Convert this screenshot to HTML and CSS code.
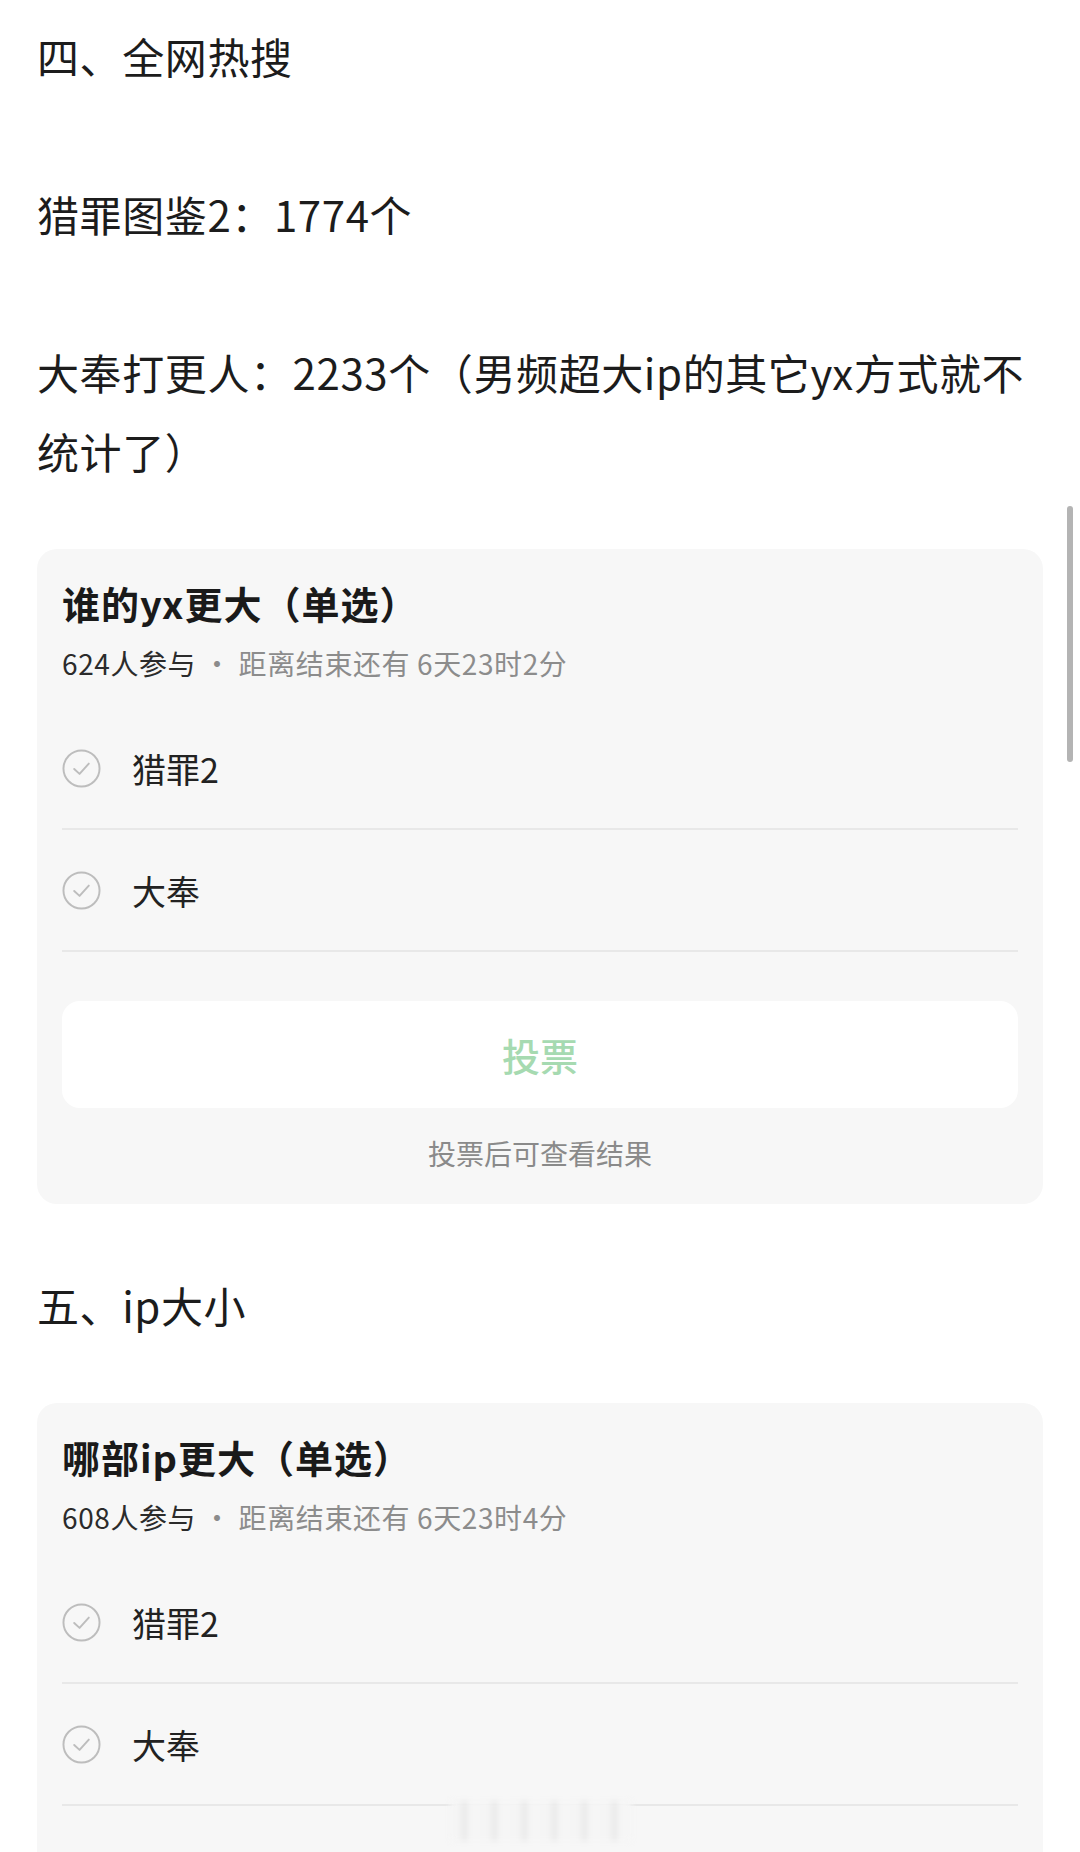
FILE: index.html
```html
<!DOCTYPE html>
<html lang="zh-CN">
<head>
    <meta charset="UTF-8">
    <meta name="viewport" content="width=device-width, initial-scale=1.0">
    <title>投票</title>
    <link rel="stylesheet" href="styles.css">
</head>
<body>
    <div class="page">
        <p class="para">四、全网热搜</p>
        <p class="para">猎罪图鉴2：1774个</p>
        <p class="para">大奉打更人：2233个（男频超大ip的其它yx方式就不统计了）</p>

        <!-- Poll 1 -->
        <div class="poll">
            <h2 class="poll-title">谁的yx更大（单选）</h2>
            <div class="poll-meta"><span class="count">624人参与</span> · 距离结束还有 6天23时2分</div>
            <ul class="options">
                <li class="option">
                    <svg class="check" viewBox="0 0 40 40"><circle cx="20" cy="20" r="18.5"/><path d="M12.5 20.5 L18 25.5 L27.5 15"/></svg>
                    <span>猎罪2</span>
                </li>
                <li class="option">
                    <svg class="check" viewBox="0 0 40 40"><circle cx="20" cy="20" r="18.5"/><path d="M12.5 20.5 L18 25.5 L27.5 15"/></svg>
                    <span>大奉</span>
                </li>
            </ul>
            <button class="vote-btn">投票</button>
            <p class="poll-note">投票后可查看结果</p>
        </div>

        <p class="para">五、ip大小</p>

        <!-- Poll 2 (runs past the bottom of the screen) -->
        <div class="poll poll-open">
            <h2 class="poll-title">哪部ip更大（单选）</h2>
            <div class="poll-meta"><span class="count">608人参与</span> · 距离结束还有 6天23时4分</div>
            <ul class="options">
                <li class="option">
                    <svg class="check" viewBox="0 0 40 40"><circle cx="20" cy="20" r="18.5"/><path d="M12.5 20.5 L18 25.5 L27.5 15"/></svg>
                    <span>猎罪2</span>
                </li>
                <li class="option">
                    <svg class="check" viewBox="0 0 40 40"><circle cx="20" cy="20" r="18.5"/><path d="M12.5 20.5 L18 25.5 L27.5 15"/></svg>
                    <span>大奉</span>
                </li>
            </ul>
        </div>
    </div>

    <!-- overlays -->
    <div class="scrollbar"></div>
    <div class="smudge"></div>
</body>
</html>
```

FILE: styles.css
```css
/* Basic Styling */
html, body {
    margin: 0;
    height: 1852px;
    overflow: hidden;
    background-color: #fff;
}

body {
    font-family: "Noto Sans CJK SC", "Noto Sans", sans-serif;
    color: #1c1c1c;
}

.page {
    padding: 16px 37px 0;
}

/* Article Text */
.para {
    margin: 0;
    font-size: 42px;
    line-height: 79px;
    letter-spacing: 0.6px;
}

.para + .para {
    margin-top: 79px;
}

/* Poll Card */
.poll {
    margin: 59px 0 61px;
    padding: 28px 25px 31px;
    background-color: #f7f7f7;
    border-radius: 20px;
}

.poll-open {
    padding-bottom: 120px;
}

.poll-title {
    margin: 0;
    font-size: 38px;
    line-height: 52px;
    font-weight: 700;
    letter-spacing: 1px;
    color: #1a1a1a;
}

.poll-meta {
    margin-top: 14px;
    font-size: 28px;
    line-height: 40px;
    letter-spacing: 0.6px;
    color: #8c8c8c;
}

.poll-meta .count {
    color: #2b2b2b;
}

.options {
    list-style: none;
    margin: 25px 0 0;
    padding: 0;
}

.option {
    display: flex;
    align-items: center;
    gap: 31px;
    height: 120px;
    border-bottom: 2px solid #e8e8e8;
    font-size: 34px;
    color: #222;
}

.check {
    width: 39px;
    height: 39px;
    flex-shrink: 0;
    fill: none;
    stroke: #bdbdbd;
    stroke-width: 2;
    stroke-linecap: round;
    stroke-linejoin: round;
}

.vote-btn {
    display: block;
    width: 100%;
    height: 107px;
    margin-top: 49px;
    border: none;
    border-radius: 18px;
    background-color: #fff;
    font-family: inherit;
    font-size: 38px;
    font-weight: 500;
    color: #a6dab1;
}

.poll-note {
    margin: 25px 0 0;
    text-align: center;
    font-size: 28px;
    line-height: 40px;
    color: #8a8a8a;
}

/* Overlays */
.scrollbar {
    position: fixed;
    top: 506px;
    right: 7px;
    width: 6px;
    height: 256px;
    border-radius: 3px;
    background-color: #b4b4b4;
}

.smudge {
    position: fixed;
    left: 450px;
    top: 1801px;
    width: 182px;
    height: 40px;
    background: repeating-linear-gradient(90deg, #f5f5f5 0 12px, #e6e6e6 12px 17px, #f6f6f6 17px 30px);
    filter: blur(3px);
}
```
